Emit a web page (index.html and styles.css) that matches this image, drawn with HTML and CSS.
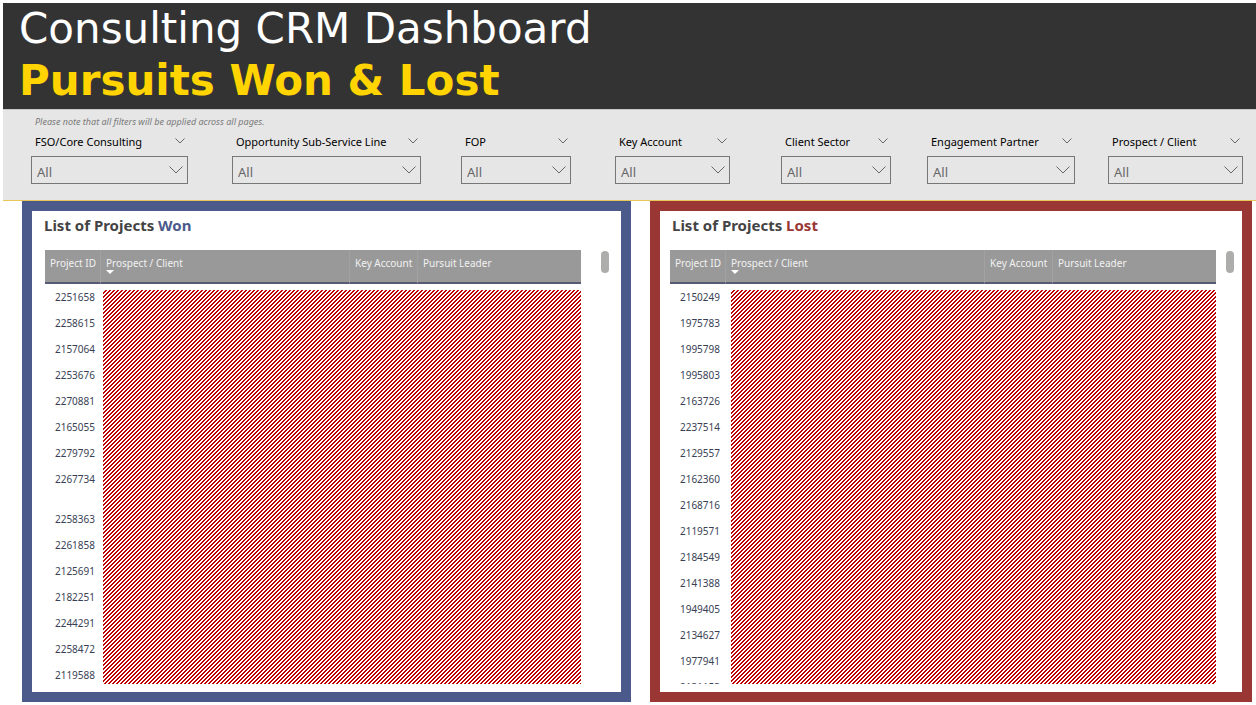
FILE: index.html
```html
<!DOCTYPE html>
<html lang="en">
<head>
<meta charset="utf-8">
<title>Consulting CRM Dashboard</title>
<link rel="stylesheet" href="styles.css">
</head>
<body>
<header class="banner">
  <h1 class="banner-title">Consulting CRM Dashboard</h1>
  <p class="banner-subtitle">Pursuits Won &amp; Lost</p>
</header>
<section class="filters">
  <p class="filters-note">Please note that all filters will be applied across all pages.</p>
  <div class="filter-row" id="filters"></div>
</section>
<main class="panels">
  <section class="panel panel-won">
    <h2 class="panel-title">List of Projects <span class="accent">Won</span></h2>
    <div class="panel-body">
      <div class="table-clip" id="won"></div>
      <div class="scroll-thumb"></div>
    </div>
  </section>
  <section class="panel panel-lost">
    <h2 class="panel-title">List of Projects <span class="accent">Lost</span></h2>
    <div class="panel-body">
      <div class="table-clip" id="lost"></div>
      <div class="scroll-thumb"></div>
    </div>
  </section>
</main>
<script src="app.js"></script>
</body>
</html>
```

FILE: styles.css
```css
* { box-sizing: border-box; }

body {
  margin: 0;
  padding: 3px 0 3px 3px;
  height: 100vh;
  min-height: 480px;
  display: flex;
  flex-direction: column;
  background: #fff;
  font-family: "Noto Sans", "Open Sans", sans-serif;
}

h1, h2, p { margin: 0; }

.banner {
  background: #333;
  height: 106px;
  padding-left: 16px;
  font-family: "DejaVu Sans", sans-serif;
  font-size: 42px;
  line-height: 52px;
  white-space: nowrap;
}
.banner-title { color: #fff; font-size: inherit; font-weight: 400; }
.banner-subtitle { color: #ffd400; font-weight: 700; }

.filters {
  background: #e6e6e6;
  border-top: 1px solid #c8c8c8;
  border-bottom: 1px solid #e8c658;
  padding: 4px 13px 16px 28px;
}
.filters-note {
  padding-left: 4px;
  font-size: 9px;
  line-height: 16px;
  font-style: italic;
  color: #7a7a7a;
}
.filter-row {
  display: grid;
  grid-template-columns: 201fr 229fr 154fr 166fr 146fr 181fr 135fr;
}
.filter { padding-right: 44px; min-width: 0; }
.filter:nth-child(2) { padding-right: 40px; }
.filter:nth-child(4) { padding-right: 51px; }
.filter:nth-child(5) { padding-right: 36px; }
.filter:nth-child(6) { padding-right: 33px; }
.filter:nth-child(7) { padding-right: 0; }
.filter-head {
  display: flex;
  justify-content: space-between;
  align-items: center;
  height: 26px;
  padding: 0 3px 2px 4px;
}
.filter-label { font-size: 11px; line-height: 20px; color: #000; white-space: nowrap; }
.filter-toggle {
  display: flex;
  padding: 0 0 2px;
  border: 0;
  background: none;
}
.select-box { position: relative; }
.select-box select {
  display: block;
  width: 100%;
  height: 28px;
  padding: 4px 5px 0;
  border: 1px solid #777;
  border-radius: 0;
  background: transparent;
  appearance: none;
  font: 13px/20px "Noto Sans", "Open Sans", sans-serif;
  color: #666;
}
.select-box svg { position: absolute; right: 5px; top: 10px; pointer-events: none; }
.chevron { display: block; fill: none; stroke: #666; stroke-width: 1; }

.panels {
  flex: 1;
  min-height: 0;
  display: grid;
  grid-template-columns: 609fr 602fr;
  gap: 19px;
  padding: 0 4px 0 19px;
}
.panel {
  min-width: 0;
  min-height: 0;
  display: flex;
  flex-direction: column;
  border: 10px solid var(--accent);
  padding-bottom: 8px;
}
.panel-won { --accent: #4b5a8a; --left: 13px; --gap: 20px; --right: 12px; --hatch: 2px; }
.panel-lost { --accent: #9a3634; --left: 10px; --gap: 10px; --right: 8px; --hatch: 5px; }
.panel-title {
  padding: 4px 0 15px 12px;
  font-size: 15px;
  line-height: 20px;
  font-weight: 700;
  color: #444;
}
.accent { color: var(--accent); }
.panel-body {
  flex: 1;
  min-height: 0;
  display: flex;
  gap: var(--gap);
  padding-left: var(--left);
  padding-right: var(--right);
}
.table-clip { flex: 1; min-width: 0; overflow: hidden; }
.scroll-thumb {
  width: 8px;
  height: 22px;
  margin-top: 1px;
  border-radius: 4px;
  background: #adadab;
}

.projects { width: 100%; table-layout: fixed; border-collapse: separate; border-spacing: 0; }
.col-id { width: 56px; }
.col-account { width: 68px; }
.col-leader { width: 163px; }
.projects th {
  height: 34px;
  padding: 6px 0 0 5px;
  vertical-align: top;
  text-align: left;
  font-size: 10px;
  line-height: 14px;
  font-weight: 400;
  color: #f2f2f2;
  background: #999;
  border-bottom: 2px solid #565a72;
  border-right: 1px solid #a2a2a2;
  white-space: nowrap;
}
.projects th:last-child { border-right: 0; }
.sort { display: block; fill: #fff; }
.projects td { padding: 0; }
.id {
  height: 26px;
  font-size: 10px;
  line-height: 26px;
  text-align: right;
  color: #3a3f55;
}
.projects .id { padding-right: 6px; }
.projects .tall .id { height: 40px; padding-top: 14px; }
.redacted { position: relative; }
.redacted svg {
  position: absolute;
  top: 6px;
  left: var(--hatch);
  width: calc(100% - var(--hatch));
  height: calc(100% - 6px);
}
```

FILE: app.js
```javascript
const filters = ["FSO/Core Consulting", "Opportunity Sub-Service Line", "FOP", "Key Account",
  "Client Sector", "Engagement Partner", "Prospect / Client"];

document.getElementById("filters").innerHTML = filters.map((name, i) => `
  <div class="filter">
    <div class="filter-head">
      <label class="filter-label" for="f${i}">${name}</label>
      <button class="filter-toggle" type="button" aria-label="${name} options">
        <svg class="chevron" width="10" height="6" viewBox="0 0 10 6"><path d="M.5 .5 5 5 9.500 .5"/></svg>
      </button>
    </div>
    <div class="select-box">
      <select id="f${i}"><option>All</option></select>
      <svg class="chevron" width="14" height="8" viewBox="0 0 14 8"><path d="M.5 .5 7 7 13.500 .5"/></svg>
    </div>
  </div>`).join("");

const won = [2251658, 2258615, 2157064, 2253676, 2270881, 2165055, 2279792, 2267734,
  2258363, 2261858, 2125691, 2182251, 2244291, 2258472, 2119588];
const lost = [2150249, 1975783, 1995798, 1995803, 2163726, 2237514, 2129557, 2162360,
  2168716, 2119571, 2184549, 2141388, 1949405, 2134627, 1977941, 2131153];

function renderTable(key, ids, tallIndex) {
  const hatch = `<td class="redacted" colspan="3" rowspan="${ids.length}">
    <svg aria-hidden="true"><defs>
      <pattern id="hatch-${key}" width="4" height="4" patternUnits="userSpaceOnUse">
        <path fill="#c00000" shape-rendering="crispEdges"
          d="M2 0h2v1h-2zM1 1h2v1h-2zM0 2h2v1h-2zM0 3h1v1h-1zM3 3h1v1h-1z"/>
      </pattern></defs>
      <rect width="100%" height="100%" fill="url(#hatch-${key})"/></svg></td>`;
  document.getElementById(key).innerHTML = `
    <table class="projects">
      <colgroup><col class="col-id"><col><col class="col-account"><col class="col-leader"></colgroup>
      <thead><tr><th>Project ID</th>
        <th>Prospect / Client<svg class="sort" width="8" height="4" viewBox="0 0 8 4"><path d="M0 0h8L4 4z"/></svg></th>
        <th>Key Account</th><th>Pursuit Leader</th></tr></thead>
      <tbody>${ids.map((id, i) => `<tr${i === tallIndex ? ' class="tall"' : ""}><td class="id">${id}</td>${i ? "" : hatch}</tr>`).join("")}</tbody>
    </table>`;
}
renderTable("won", won, 8);
renderTable("lost", lost, -1);
```
